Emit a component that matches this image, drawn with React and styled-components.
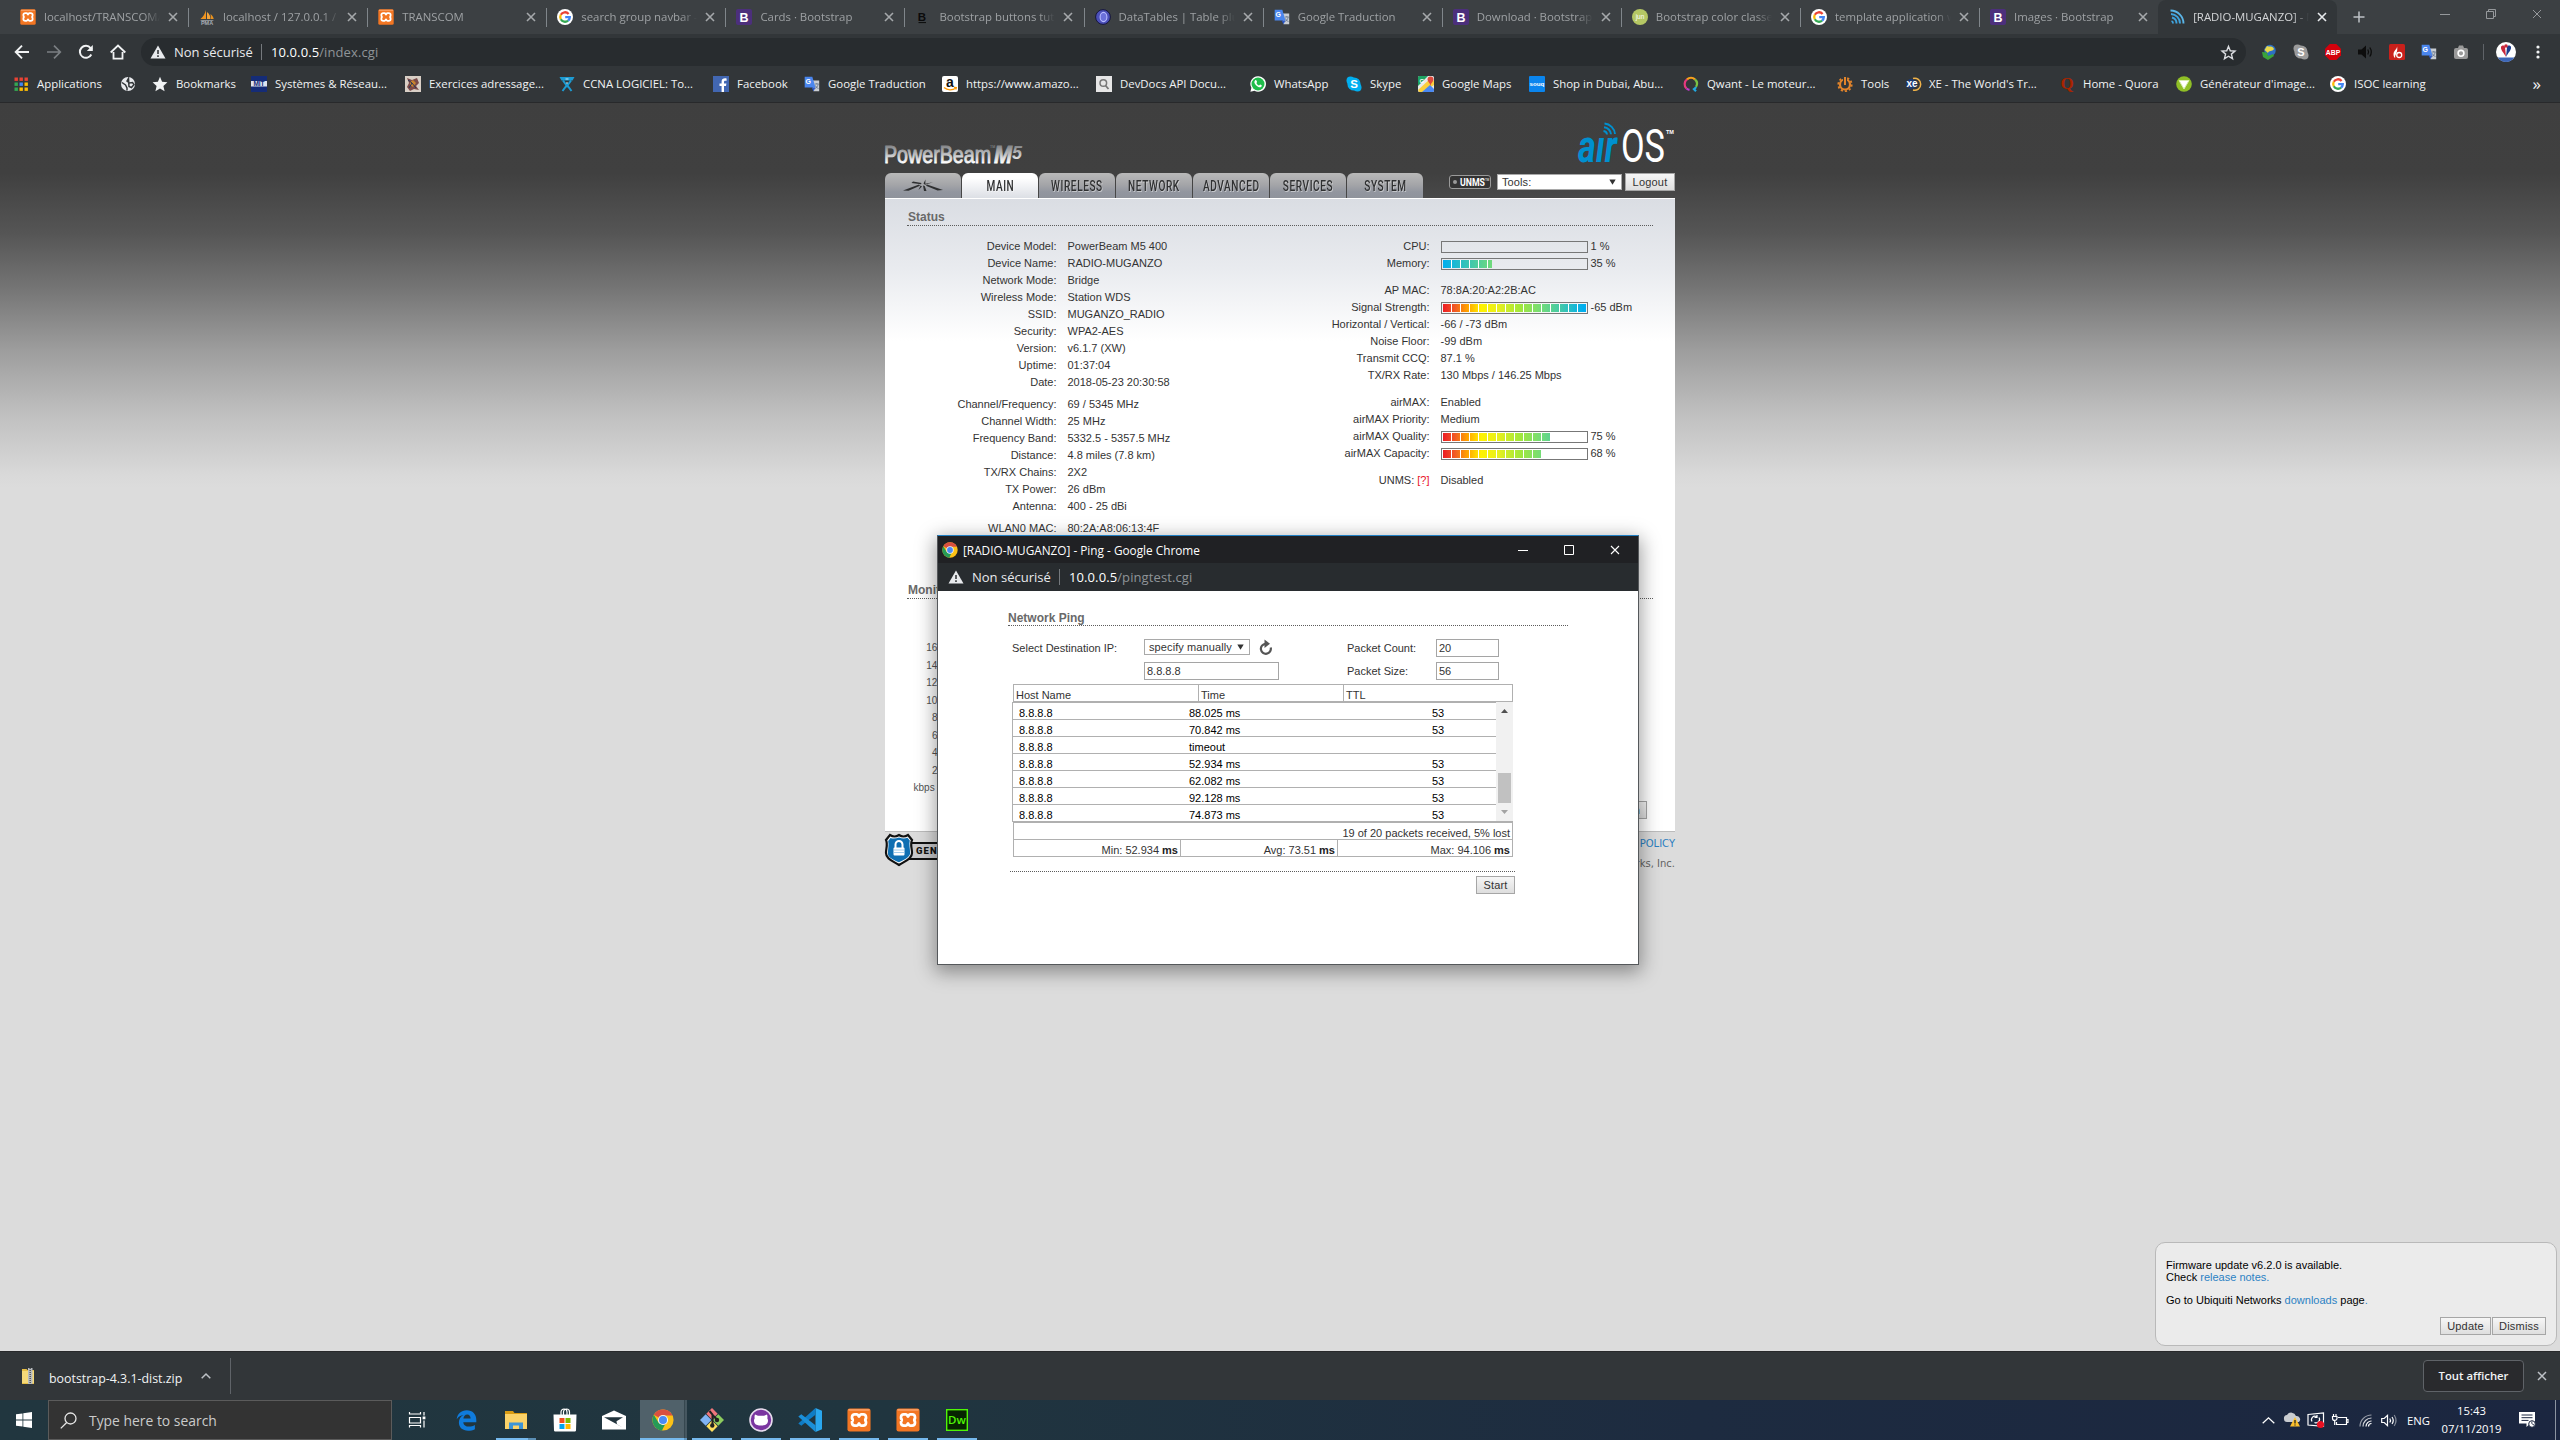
import React from 'react';
import styled, { createGlobalStyle } from 'styled-components';

const ui = `"Open Sans", "Noto Sans", sans-serif`;
const arial = `"Liberation Sans", Arial, sans-serif`;

const Global = createGlobalStyle`
  * { box-sizing: border-box; }
  html, body { margin: 0; padding: 0; background: #dcdcdc; }
  svg { display: block; flex: none; overflow: visible; }
`;

const Desktop = styled.div`
  position: relative;
  width: 2560px;
  height: 1440px;
  overflow: hidden;
  display: flex;
  flex-direction: column;
  font-family: ${ui};
`;

/* ---------- glyphs ---------- */

const Svg = ({ s = 16, w, h, vb = '0 0 16 16', children }) => (
  <svg width={w || s} height={h || s} viewBox={vb} fill="none">{children}</svg>
);

const letter = (t, fill, size, x = 8, y = 12.5, weight = 700, family = 'Liberation Sans') => (
  <text x={x} y={y} fill={fill} fontSize={size} fontWeight={weight} fontFamily={family} textAnchor="middle">{t}</text>
);

const GoogleG = () => (
  <>
    <circle cx="8" cy="8" r="8" fill="#fff" />
    <g strokeWidth="2.3">
      <path d="M11.6 4.9A4.8 4.8 0 0 0 3.8 5.7" stroke="#ea4335" />
      <path d="M3.8 5.7a4.8 4.8 0 0 0 0 4.6" stroke="#fbbc05" />
      <path d="M3.8 10.3a4.8 4.8 0 0 0 7.3 1.3" stroke="#34a853" />
      <path d="M11.1 11.6A4.8 4.8 0 0 0 12.8 8.1H8.2" stroke="#4285f4" />
    </g>
  </>
);

const Xampp = () => (
  <>
    <rect x=".3" y=".3" width="15.4" height="15.4" rx="1.5" fill="#f37623" />
    <rect x="1" y=".8" width="14" height="1" fill="#f9a36b" />
    <path d="M5.2 4.200h1.400c.9 0 1 1.500 1.400 1.500s.5-1.500 1.400-1.500h1.400c2.400 0 2.400 3.600.6 3.800 1.800.2 1.800 3.800-.6 3.800H9.400c-.9 0-1-1.500-1.400-1.500s-.5 1.500-1.400 1.500H5.200c-2.400 0-2.400-3.600-.6-3.800C2.800 7.800 2.800 4.200 5.200 4.200z" stroke="#fff" strokeWidth="1.800" />
  </>
);

const Chrome = () => (
  <>
    <circle cx="8" cy="8" r="7.7" fill="#fbc116" />
    <path d="M8 8L1.330 4.150A7.700 7.700 0 0 1 14.900 4.600L15 4.800H8z" fill="#d94f40" />
    <path d="M1.330 4.150L4.900 10.200 8 12 7.200 15.660A7.700 7.700 0 0 1 1.330 4.150z" fill="#259b57" />
    <path d="M4.900 9.900L8 11.400l1.500-.2L7.200 15.660z" fill="#259b57" />
    <circle cx="8" cy="8" r="3.700" fill="#f4f4f4" />
    <circle cx="8" cy="8" r="2.900" fill="#4a8af4" />
  </>
);

const Translate = () => (
  <>
    <path d="M7 4.500h8.200v10.700H9.500z" fill="#c9cdd3" />
    <path d="M.7.7h7.600l3.200 10.800H.7z" fill="#4a86ee" />
    <path d="M7.600 11.500h3.900l-2 3.700z" fill="#2a56c6" />
    {letter('G', '#fff', 7, 4.300, 8)}
    <path d="M10.800 8h4M12.800 7v1M11.300 12.500c1.500-.8 2.500-2.500 2.800-4.300M11.500 9.500c.5 1.500 1.500 2.500 3 3" stroke="#5f6f86" strokeWidth=".8" />
  </>
);

const Boot = () => (
  <>
    <rect width="16" height="16" rx="2" fill="#4c2f7c" />
    {letter('B', '#fff', 12.500, 8, 12.500)}
  </>
);

const airWave = (
  <g strokeWidth="1.900">
    <path d="M1.500 1.500A13 13 0 0 1 14.500 14.500" stroke="#5bb4e6" />
    <path d="M2 5A9.500 9.500 0 0 1 11 14.500" stroke="#3fa3dd" />
    <path d="M3 8.500A6 6 0 0 1 7.500 14.500" stroke="#3fa3dd" />
    <path d="M2.500 12A2.500 2.500 0 0 1 4 14.500" stroke="#3fa3dd" />
  </g>
);

const art = {
  xampp: <Xampp />,
  pma: <><path d="M7 1v9H1.500C4 8 6 5 7 1z" fill="#f0941f" /><path d="M8 3c2.500 2 3.500 4.500 3.500 7H8z" fill="#f5a43a" /><path d="M11.500 5c2 1.500 3 3.500 3.200 5h-2.700z" fill="#e8911e" /><path d="M1 11h14l-1.500 1h-11z" fill="#8a8f94" /><text x="8" y="16" textAnchor="middle" fontSize="5.500" fontWeight="700" fontFamily="Liberation Sans" fill="#a7adb5">PMA</text></>,
  google: <GoogleG />,
  boot: <Boot />,
  w3: <><g>{letter('B', '#0b0b0b', 11.500, 7, 11.500)}</g><path d="M3.500 13.600h7.500" stroke="#0b0b0b" strokeWidth="1" /></>,
  dt: <><circle cx="8" cy="8" r="7.400" fill="#4b4fb8" stroke="#15153a" /><ellipse cx="8.500" cy="8" rx="3.400" ry="4.600" fill="#6b70da" stroke="#b8bbff" strokeWidth="1.100" /></>,
  translate: <Translate />,
  jun: <><circle cx="8" cy="8" r="8" fill="#b5c764" />{letter('jun', '#fff', 6.500, 8, 10, 400)}</>,
  air: airWave,
  apps: <>{[0, 1, 2].map((r) => [0, 1, 2].map((c) => <rect key={r + '-' + c} x={1.500 + c * 5} y={1.500 + r * 5} width="3.400" height="3.400" fill={[['#ea4335', '#ea4335', '#ea4335'], ['#34a853', '#4285f4', '#fbbc05'], ['#34a853', '#fbbc05', '#fbbc05']][r][c]} />))}</>,
  globe: <><circle cx="8" cy="8" r="7" fill="#e8eaed" /><path d="M2 6.500L5.500 9l1.500 3v2.500M8.500 2.500L7 5l2.500 2 3-.5 1.500 2-2.500 3-2.500-1z" stroke="#323639" strokeWidth="1.500" /></>,
  star: <path d="M8 .8l2.100 5 5.300.5-4 3.600 1.200 5.300L8 12.400l-4.600 2.800 1.200-5.300-4-3.600 5.300-.5z" fill="#f1f3f4" />,
  mit: <><rect width="16" height="16" fill="#152c77" /><rect x="0" y="5" width="16" height="5.500" fill="#dfe3ef" />{letter('MIT', '#152c77', 6.500, 8, 10)}</>,
  exo: <><rect width="16" height="16" fill="#d9cfc6" /><path d="M2 2l5 2 5-2 2 5-3 3 3 4-5-1-4 2-3-4 2-4z" fill="#7b4a48" /><path d="M5 6l3-2 3 3-3 4-3-2z" fill="#c8832f" /><path d="M4 12l3-5 4 5M3 4l4 3" stroke="#2b3557" /></>,
  ccna: <><path d="M.5 1h15l-2 3.500h-11z" fill="#1d9bd3" /><path d="M4 4.500l4 5.500 4-5.500M3.500 15L8 9l4.500 6" stroke="#1d9bd3" strokeWidth="2" /><path d="M6.500 3h3M8 6v2" stroke="#c8eefe" /></>,
  fb: <><rect width="16" height="16" fill="#4267b2" /><path d="M11 16V10h2l.4-2.500H11V6c0-.8.4-1.300 1.400-1.300h1.200V2.500c-3-.5-5 .4-5 3.200v1.800H6.500V10h2.100v6z" fill="#fff" /></>,
  amazon: <><rect width="16" height="16" rx="2" fill="#fff" />{letter('a', '#111', 14, 8, 10.500)}<path d="M2 11.500c3.500 3 8.500 3 12 .5M12 11.300l2.300.2-.5 2" stroke="#f90" strokeWidth="1.300" /></>,
  dev: <><rect width="16" height="16" fill="#e6e6e6" /><circle cx="7.300" cy="7" r="3.300" stroke="#777" strokeWidth="1.500" /><path d="M9.500 9.500l3 3.500" stroke="#777" strokeWidth="1.800" /></>,
  wa: <><path d="M8 .3a7.600 7.600 0 0 0-6.600 11.400L.4 15.700l4.100-1A7.700 7.700 0 1 0 8 .3z" fill="#fff" /><circle cx="8" cy="8" r="6.500" fill="#1fbd4b" /><path d="M5 4.500c1-1 1.500 0 2 1.200.2.600-.7 1-.5 1.500.6 1.200 1.500 1.900 2.500 2.200.5.100.8-1 1.300-.8 1.500.7 1.800.9 1.200 1.900-1 1.500-3.500.9-5.500-1.200S4 5.600 5 4.500z" fill="#fff" /></>,
  skype: <><circle cx="8" cy="8" r="6.600" fill="#00aff0" /><circle cx="4.500" cy="4.500" r="4" fill="#00aff0" /><circle cx="11.500" cy="11.500" r="4" fill="#00aff0" />{letter('S', '#fff', 11.500, 8, 12.200)}</>,
  maps: <><rect width="16" height="16" rx="1.500" fill="#e9e9e9" /><path d="M1 0h9L0 10V1z" fill="#1ea362" /><path d="M0 14L13 2l3 3v4L5 16H1z" fill="#fbcf3c" /><path d="M4 16l8-7 4 4v2l-1 1z" fill="#4a89f3" /><path d="M12.500.5a3 3 0 0 1 3 3c0 2-2.200 3-3 6-.8-3-3-4-3-6a3 3 0 0 1 3-3z" fill="#dd4b3e" />{letter('G', '#fff', 6, 3.800, 6.500)}</>,
  souq: <><rect width="16" height="16" rx="1" fill="#0a85ee" />{letter('souq', '#fff', 6.200, 8, 10)}</>,
  qwant: <g strokeWidth="2.200"><path d="M3.500 12.500A6 6 0 0 1 4 3.400" stroke="#e5397f" /><path d="M4 3.400A6 6 0 0 1 12 3.400" stroke="#f9a11b" /><path d="M12 3.400a6 6 0 0 1 1 7.500" stroke="#7ac143" /><path d="M13 10.900a6 6 0 0 1-2 2.300l2 2" stroke="#21a9e1" /><path d="M3.500 12.500a6 6 0 0 0 3 1.400" stroke="#c33bd1" /></g>,
  gear: <><circle cx="8" cy="8.500" r="5" stroke="#e2842b" strokeWidth="2.200" /><circle cx="8" cy="8.500" r="6.700" stroke="#e2842b" strokeWidth="1.800" strokeDasharray="2.200 2" /><path d="M8 1v8" stroke="#323639" strokeWidth="4" /><path d="M8 1v8" stroke="#e2842b" strokeWidth="2" /></>,
  xe: <><path d="M8 2.500A6 6 0 1 1 8 14" stroke="#f0b34a" strokeWidth="1.500" /><circle cx="6" cy="8" r="5" fill="#1d3a72" />{letter('xe', '#fff', 10, 7, 11)}</>,
  quora: <>{letter('Q', '#a82400', 17, 8, 13, 700, 'Liberation Serif')}</>,
  gen: <><circle cx="8" cy="8" r="7.800" fill="#8fbf26" /><path d="M3 4.500h10L8 13z" fill="#fff" stroke="#d7ecae" /></>,
  idm: <><circle cx="9" cy="6.500" r="5.700" fill="#2d6fc4" /><path d="M6 2c2 1 6-.5 7 3-2 3-5 1-6 4L3.500 6z" fill="#e8d84b" /><path d="M1 8l5 .5L7 12l5-2 1 2-6 4-5-3z" fill="#3aa33c" /></>,
  skypeGrey: <><circle cx="8" cy="8" r="6.600" fill="#9b9b9b" /><circle cx="4.500" cy="4.500" r="4" fill="#9b9b9b" /><circle cx="11.500" cy="11.500" r="4" fill="#9b9b9b" />{letter('S', '#fff', 11, 8, 12)}</>,
  abp: <><path d="M4.700 0h6.600L16 4.700v6.600L11.300 16H4.700L0 11.300V4.700z" fill="#d3010c" />{letter('ABP', '#fff', 6.800, 8, 10.500)}</>,
  sound: <><path d="M1 5.500h3.500L9 1.500v13l-4.500-4H1z" fill="#0d0d0d" /><path d="M10.800 5.500q1.600 2.500 0 5M12.800 3.500q3 4.500 0 9" stroke="#0d0d0d" strokeWidth="1.300" /></>,
  fire: <><rect width="16" height="16" rx="1.500" fill="#c9201b" /><circle cx="10.200" cy="11" r="2.500" stroke="#fff" strokeWidth="1.300" /><path d="M8 2c.6 3-3.500 4.500-3.500 8.200 0 2 .7 3.300 1.700 3.800C5.500 10.500 9.500 8.500 8 2z" fill="#fff" /></>,
  camera: <><rect x="1" y="4" width="14" height="11" rx="2" fill="#9a9a9a" /><path d="M5 4l1-2.500h4L11 4z" fill="#9a9a9a" /><circle cx="8" cy="9.300" r="2.900" stroke="#fff" strokeWidth="1.600" /></>,
};

const Fav = ({ n }) => <Svg>{art[n]}</Svg>;
const Close = ({ s = 10, c = '#a5a8ab', w = 1.6 }) => <Svg s={s} vb="0 0 10 10"><path d="M1 1l8 8M9 1L1 9" stroke={c} strokeWidth={w} /></Svg>;
const Warn = () => <Svg w={16} h={14} vb="0 0 16 14"><path d="M8 .5L15.500 13.500H.5z" fill="#e8eaed" /><path d="M8 5v4M8 10.300v1.700" stroke="#282c2f" strokeWidth="1.500" /></Svg>;

/* ---------- tab strip ---------- */

const Strip = styled.div`
  height: 34px;
  flex: none;
  background: #3c4043;
  display: flex;
  padding-left: 9px;
`;
const Tab = styled.div`
  position: relative;
  width: 179.1px;
  flex: none;
  height: 34px;
  padding: 0 10px 0 11px;
  display: flex;
  align-items: center;
  border-radius: 8px 8px 0 0;
  background: ${(p) => (p.$on ? '#323639' : 'transparent')};
  color: ${(p) => (p.$on ? '#d3d5d7' : '#9ea1a4')};
  font-size: 11.4px;
  &::after {
    content: '';
    display: ${(p) => (p.$line ? 'block' : 'none')};
    position: absolute;
    right: -1px;
    top: 8px;
    width: 1px;
    height: 19px;
    background: #80868b;
  }
`;
const TabText = styled.span`
  width: 116px;
  margin: 0 8px 0 8px;
  flex: none;
  line-height: 16px;
  overflow: hidden;
  white-space: nowrap;
  mask-image: linear-gradient(90deg, #000 86%, transparent);
`;
const NewTab = styled.div`
  width: 44px;
  display: flex;
  align-items: center;
  justify-content: center;
`;
const WinButtons = styled.div`
  margin-left: auto;
  height: 28px;
  display: flex;
  & > * { width: 46px; display: flex; align-items: center; justify-content: center; }
`;

const tabs = [
  ['xampp', 'localhost/TRANSCOM/'], ['pma', 'localhost / 127.0.0.1 / t'], ['xampp', 'TRANSCOM'], ['google', 'search group navbar - R'],
  ['boot', 'Cards · Bootstrap'], ['w3', 'Bootstrap buttons tuto'], ['dt', 'DataTables | Table plug'], ['translate', 'Google Traduction'],
  ['boot', 'Download · Bootstrap'], ['jun', 'Bootstrap color classes'], ['google', 'template application we'], ['boot', 'Images · Bootstrap'], ['air', '[RADIO-MUGANZO] - M'],
];

/* ---------- toolbar ---------- */

const Toolbar = styled.div`
  height: 36px;
  flex: none;
  background: #323639;
  display: flex;
  align-items: center;
`;
const NavIcons = styled.div`
  width: 141px;
  padding-left: 14px;
  display: flex;
  gap: 16px;
`;
const Omnibox = styled.div`
  width: 2105px;
  height: 28px;
  border-radius: 14px;
  background: #282c2f;
  padding: 0 10px 0 9px;
  display: flex;
  align-items: center;
`;
const Insecure = styled.span`
  margin-left: 8px;
  width: 79px;
  font-size: 13px;
  line-height: 18px;
  white-space: nowrap;
  color: #e8eaed;
`;
const Divider = styled.i`
  width: 1px;
  height: 16px;
  margin: 0 9px 0 8px;
  background: #75797d;
`;
const Url = styled.span`
  font-size: 13px;
  line-height: 18px;
  color: #8f9498;
  letter-spacing: 0.1px;
  b { font-weight: 400; color: #fff; }
`;
const Push = styled.div`flex: 1;`;
const Extensions = styled.div`
  padding-left: 15px;
  display: flex;
  align-items: center;
  gap: 16px;
`;
const ToolLine = styled.i`
  width: 1px;
  height: 16px;
  margin: 0 12px 0 14px;
  background: #5f6368;
`;

/* ---------- bookmarks ---------- */

const Bookmarks = styled.div`
  height: 33px;
  flex: none;
  padding: 0 19px 4px 13px;
  display: flex;
  align-items: center;
  background: #323639;
  border-bottom: 1px solid #28292b;
`;
const Mark = styled.div`
  width: ${(p) => p.$w}px;
  flex: none;
  display: flex;
  align-items: center;
  gap: 8px;
  font-size: 11.4px;
  line-height: 16px;
  color: #f1f3f4;
  white-space: nowrap;
`;
const More = styled.span`
  margin-left: auto;
  font-size: 17px;
  line-height: 16px;
  color: #f1f3f4;
`;
const marks = [
  ['apps', 'Applications', 107], ['globe', '', 32], ['star', 'Bookmarks', 99], ['mit', 'Systèmes & Réseau...', 154], ['exo', 'Exercices adressage...', 154],
  ['ccna', 'CCNA LOGICIEL: To...', 154], ['fb', 'Facebook', 91], ['translate', 'Google Traduction', 138], ['amazon', 'https://www.amazo...', 154],
  ['dev', 'DevDocs API Docu...', 154], ['wa', 'WhatsApp', 96], ['skype', 'Skype', 72], ['maps', 'Google Maps', 111], ['souq', 'Shop in Dubai, Abu...', 154],
  ['qwant', 'Qwant - Le moteur...', 154], ['gear', 'Tools', 68], ['xe', "XE - The World's Tr...", 154], ['quora', 'Home - Quora', 117],
  ['gen', "Générateur d'image...", 154], ['google', 'ISOC learning', 110],
];

/* ---------- airOS page ---------- */

const Page = styled.main`
  height: 1248px;
  flex: none;
  display: flex;
  flex-direction: column;
  align-items: center;
  font: 11px/17px ${arial};
  color: #333;
  background: linear-gradient(#3f3f3f 0, #404040 70px, #555555 130px, #747474 184px, #9d9d9d 247px, #c1c1c1 314px, #d9d9d9 372px, #dcdcdc 385px);
`;
const Column = styled.div`width: 790px;`;
const Brand = styled.header`
  height: 70px;
  display: flex;
  justify-content: space-between;
`;
const BrandLeft = styled.div`padding-top: 41px;`;
const BrandRight = styled.div`padding-top: 18px;`;
const NavRow = styled.nav`
  height: 25px;
  display: flex;
`;
const NavTab = styled.div`
  width: 76px;
  height: 25px;
  margin-right: 1px;
  border-radius: 6px 6px 0 0;
  display: flex;
  align-items: center;
  justify-content: center;
  background: ${(p) => (p.$on ? 'linear-gradient(#ffffff 20%, #dcdfe5)' : 'linear-gradient(#b9b9b9, #a5a6a9 45%, #92969f 75%, #8f939b)')};
  span {
    font: 500 14px/16px Roboto, sans-serif;
    letter-spacing: 0.8px;
    color: #2f3031;
    text-shadow: 1px 1px 0 rgba(255, 255, 255, 0.45);
    transform: scaleX(0.72);
    white-space: nowrap;
    margin-top: 1px;
  }
`;
const NavTools = styled.div`
  margin-left: auto;
  display: flex;
  align-items: flex-start;
`;
const Unms = styled.div`
  width: 42px;
  height: 14px;
  margin: 2px 6px 0 0;
  border: 1px solid #9a9a9a;
  border-radius: 3px;
  background: #333;
  display: flex;
  align-items: center;
  padding-left: 3px;
  gap: 3px;
  i { width: 4px; height: 4px; border-radius: 2px; background: #999; }
`;
const Select = styled.div`
  width: ${(p) => p.$w}px;
  height: 16px;
  margin-top: ${(p) => p.$mt || 0}px;
  padding: 0 5px 0 4px;
  border: 1px solid #a9a9a9;
  background: #fff;
  display: flex;
  align-items: center;
  justify-content: space-between;
  line-height: 14px;
  letter-spacing: 0.1px;
  color: #333;
`;
const Arrow = () => <Svg w={7} h={6} vb="0 0 7 6"><path d="M.3.500h6.400L3.500 5.800z" fill="#333" /></Svg>;
const Button = styled.button`
  width: ${(p) => p.$w}px;
  height: 18px;
  margin: 0;
  padding: 0;
  border: 1px solid #a6a6a6;
  background: linear-gradient(#f6f6f6, #dedede);
  font: 11px/15px ${arial};
  letter-spacing: 0.2px;
  color: #333;
`;
const LogoutButton = styled(Button)`margin-left: 3px;`;
const Panel = styled.section`
  height: 634px;
  padding: 0 22px;
  border-top: 1px solid #fff;
  border-bottom: 1px solid #bcbcbc;
  background: linear-gradient(#dadde3, #e9ebef 70px, #ffffff 142px);
`;
const Title = styled.h2`
  height: 27px;
  margin: 0;
  padding: 11px 0 0 1px;
  border-bottom: 1px dotted #5c5c5c;
  font: bold 12px/15px ${arial};
  color: #696969;
`;
const PingHeading = styled(Title)`
  width: 560px;
  padding: 12px 0 0 0;
`;
const StatusGrid = styled.div`
  height: 346px;
  padding-top: 12px;
  display: grid;
  grid-template-columns: 373px 1fr;
`;
const Row = styled.div`
  height: 17px;
  margin-bottom: ${(p) => p.$gap || 0}px;
  display: grid;
  grid-template-columns: 149.5px 1fr;
  column-gap: 11px;
  white-space: nowrap;
  & > :first-child { text-align: right; }
  em { font-style: normal; color: #e8132b; }
`;
const Value = styled.div`
  display: flex;
  align-items: center;
  gap: 3px;
`;
const Meter = styled.div`
  width: 147px;
  height: 12px;
  padding: 1px;
  border: 1px solid #777;
`;
const Fill = styled.div`
  height: 8px;
  width: ${(p) => p.$px}px;
  background:
    repeating-linear-gradient(90deg, transparent 0 8px, #fff 8px 9px),
    ${(p) => (p.$cool
    ? 'linear-gradient(90deg, #00aeef, #73db78 50px)'
    : 'linear-gradient(90deg, #ed1c24 0, #f15a24 12px, #ffa000 24px, #fff200 38px, #e6f01e 56px, #a5e838 76px, #74dc78 98px, #3cc6b0 120px, #00aeef 140px)')};
`;
const left = [
  ['Device Model:', 'PowerBeam M5 400'], ['Device Name:', 'RADIO-MUGANZO'], ['Network Mode:', 'Bridge'], ['Wireless Mode:', 'Station WDS'],
  ['SSID:', 'MUGANZO_RADIO'], ['Security:', 'WPA2-AES'], ['Version:', 'v6.1.7 (XW)'], ['Uptime:', '01:37:04'], ['Date:', '2018-05-23 20:30:58', 5],
  ['Channel/Frequency:', '69 / 5345 MHz'], ['Channel Width:', '25 MHz'], ['Frequency Band:', '5332.5 - 5357.5 MHz'], ['Distance:', '4.8 miles (7.8 km)'],
  ['TX/RX Chains:', '2X2'], ['TX Power:', '26 dBm'], ['Antenna:', '400 - 25 dBi', 5], ['WLAN0 MAC:', '80:2A:A8:06:13:4F'],
];
const right = [
  ['CPU:', '1 %', 0, { px: 0 }], ['Memory:', '35 %', 10, { px: 49, cool: true }], ['AP MAC:', '78:8A:20:A2:2B:AC'], ['Signal Strength:', '-65 dBm', 0, { px: 143 }],
  ['Horizontal / Vertical:', '-66 / -73 dBm'], ['Noise Floor:', '-99 dBm'], ['Transmit CCQ:', '87.1 %'], ['TX/RX Rate:', '130 Mbps / 146.25 Mbps', 10],
  ['airMAX:', 'Enabled'], ['airMAX Priority:', 'Medium'], ['airMAX Quality:', '75 %', 0, { px: 107 }], ['airMAX Capacity:', '68 %', 10, { px: 98 }],
  [<>UNMS: <em>[?]</em></>, 'Disabled'],
];
const Axis = styled.div`
  width: 36px;
  height: 150px;
  margin-top: 44px;
  display: flex;
  flex-direction: column;
  justify-content: space-between;
  text-align: right;
  font-size: 10px;
  line-height: 10px;
  white-space: nowrap;
  color: #545454;
`;
const RefreshLine = styled.div`
  margin: 8px 6px 0 0;
  display: flex;
  justify-content: flex-end;
`;
const Foot = styled.footer`
  display: flex;
  justify-content: space-between;
`;
const FootText = styled.div`
  padding-top: 2px;
  text-align: right;
  font: 10px/20px "DejaVu Sans", sans-serif;
  color: #636363;
  a { color: #2b7fc0; }
`;

/* ---------- ping window ---------- */

const PingWindow = styled.div`
  position: absolute;
  left: 937px;
  top: 535px;
  width: 702px;
  height: 430px;
  border: 1px solid #55585b;
  border-top-color: #2180c4;
  background: #fff;
  box-shadow: 0 5px 18px 2px rgba(0, 0, 0, 0.38);
  display: flex;
  flex-direction: column;
`;
const PingTitle = styled.div`
  height: 27px;
  flex: none;
  padding-left: 4px;
  display: flex;
  align-items: center;
  gap: 5px;
  background: #202124;
  color: #fff;
  font-size: 11.8px;
  line-height: 18px;
`;
const PingButtons = styled.div`
  margin-left: auto;
  display: flex;
  & > * { width: 46px; display: flex; justify-content: center; align-items: center; }
`;
const PingUrl = styled.div`
  height: 28px;
  flex: none;
  padding-left: 10px;
  display: flex;
  align-items: center;
  background: #282c2f;
`;
const PingBody = styled.div`
  flex: 1;
  padding: 8px 70px 0 70px;
  font: 11px/18px ${arial};
  color: #333;
`;
const Form = styled.div`
  margin-top: 13px;
  padding-left: 4px;
  display: grid;
  grid-template-columns: 132px 203px 89px 63px;
  grid-template-rows: 18px 18px;
  row-gap: 5px;
`;
const Field = styled.div`
  width: ${(p) => p.$w}px;
  height: 18px;
  padding-left: 2px;
  border: 1px solid #a5a5a5;
  line-height: 17px;
`;
const Line = styled.div`display: flex; gap: 9px;`;
const Table = styled.div`
  width: 501px;
  margin: 4px 0 0 4px;
  color: #333;
`;
const HeadRow = styled.div`
  height: 18px;
  margin-left: 1px;
  display: flex;
  border: 1px solid #b0b0b0;
  line-height: 21px;
`;
const HeadCell = styled.div`
  width: ${(p) => p.$w}px;
  padding-left: 2px;
  border-right: ${(p) => (p.$end ? 0 : 1)}px solid #b0b0b0;
`;
const List = styled.div`
  height: 120px;
  display: flex;
  border: solid #b0b0b0;
  border-width: 0 0 1px 1px;
`;
const Rows = styled.div`flex: 1; border-top: 1px solid #b0b0b0;`;
const PingRow = styled.div`
  height: 17px;
  padding-left: 6px;
  display: grid;
  grid-template-columns: 170px 243px 1fr;
  border-bottom: 1px solid #b0b0b0;
  line-height: 20px;
  color: #000;
  &:last-child { border-bottom: 0; }
`;
const Scroll = styled.div`
  width: 17px;
  padding: 7px 2px 7px;
  background: #f1f1f1;
  display: flex;
  flex-direction: column;
  align-items: center;
`;
const Thumb = styled.div`
  width: 13px;
  height: 30px;
  margin: auto 0 7px;
  background: #c1c1c1;
`;
const Summary = styled.div`
  height: ${(p) => (p.$end ? 17 : 18)}px;
  margin-left: 1px;
  display: flex;
  border: 1px solid #b0b0b0;
  border-width: ${(p) => (p.$end ? '0 1px 1px' : '1px')};
  line-height: ${(p) => (p.$end ? 20 : 21)}px;
`;
const SumCell = styled.div`
  width: ${(p) => p.$w}px;
  padding-right: 2px;
  text-align: right;
  border-right: ${(p) => (p.$end ? 0 : 1)}px solid #b0b0b0;
  b { color: #222; }
`;
const StartLine = styled.div`
  width: 505px;
  margin: 14px 0 0 2px;
  padding-top: 4px;
  border-top: 1px dotted #5c5c5c;
  display: flex;
  justify-content: flex-end;
`;
const pings = ['88.025 ms', '70.842 ms', 'timeout', '52.934 ms', '62.082 ms', '92.128 ms', '74.873 ms'];

/* ---------- toast ---------- */

const Toast = styled.div`
  position: absolute;
  left: 2155px;
  top: 1242px;
  width: 402px;
  height: 104px;
  padding: 16px 10px 0 10px;
  border: 1px solid #b9b9b9;
  border-radius: 10px;
  background: #ebebeb;
  font: 11px/12px ${arial};
  color: #000;
  p { margin: 0 0 11px; }
  a { color: #2b82c4; }
`;
const ToastButtons = styled.div`
  display: flex;
  justify-content: flex-end;
  gap: 1px;
`;

/* ---------- downloads ---------- */

const Downloads = styled.div`
  height: 49px;
  flex: none;
  border-top: 1px solid #28292b;
  background: #323639;
  display: flex;
  align-items: center;
  color: #f1f3f4;
  padding: 0 13px 0 20px;
`;
const FileName = styled.span`
  width: 152px;
  margin-left: 13px;
  padding-top: 5px;
  font-size: 12.4px;
  line-height: 18px;
`;
const DlLine = styled.i`
  width: 1px;
  height: 36px;
  margin-left: 19px;
  background: #5f6368;
`;
const ShowAll = styled.div`
  width: 101px;
  height: 32px;
  margin: 0 13px 0 auto;
  border: 1px solid #5f6368;
  border-radius: 4px;
  background: #292a2d;
  font-size: 11.3px;
  font-weight: 600;
  line-height: 30px;
  text-align: center;
`;

/* ---------- taskbar ---------- */

const Taskbar = styled.div`
  height: 40px;
  flex: none;
  display: flex;
  background: linear-gradient(90deg, #21363f 0, #20353f 900px, #1d2b40 1700px, #1b2640 2560px);
`;
const StartBtn = styled.div`
  width: 48px;
  display: flex;
  align-items: center;
  justify-content: center;
`;
const Search = styled.div`
  width: 344px;
  border: 1px solid #5b5b5b;
  background: #333;
  padding-left: 11px;
  display: flex;
  align-items: center;
  gap: 12px;
  font-size: 13.9px;
  color: #cbcbcb;
`;
const lines = {
  multi: 'linear-gradient(90deg, transparent 0 5px, #76b9ed 5px 37px, #5b8fb5 37px 45px, transparent 45px)',
  active: 'linear-gradient(90deg, transparent 0 2px, #76b9ed 2px 46px, #5d93bd 46px)',
  run: 'linear-gradient(90deg, transparent 0 5px, #76b9ed 5px 45px, transparent 45px)',
};
const Task = styled.div`
  width: ${(p) => p.$w || 49}px;
  display: flex;
  align-items: center;
  justify-content: center;
  background-image:
    ${(p) => lines[p.$state] || 'none'},
    ${(p) => (p.$state === 'active' ? 'linear-gradient(90deg, transparent 0 2px, #50616a 2px 46px, #36474f 46px 47px, #465760 47px)' : 'none')};
  background-size: 100% 2px, 100% 100%;
  background-position: 0 100%, 0 0;
  background-repeat: no-repeat;
`;
const Tray = styled.div`
  margin-left: auto;
  display: flex;
  align-items: center;
  color: #fff;
  font-size: 11.3px;
`;
const TrayItem = styled.div`
  width: ${(p) => p.$w}px;
  display: flex;
  justify-content: center;
`;
const Clock = styled.div`
  width: 71px;
  text-align: center;
  line-height: 18px;
`;
const Peek = styled.i`
  width: 5px;
  height: 40px;
  border-left: 1px solid #8b93a0;
`;

const tasks = [
  ['view', <Svg s={18} vb="0 0 18 18"><path d="M1.500 1v2h11V1M1.500 6.500h11v5.500h-11zM1.500 16.500v-2h11v2M16 1v3.500M16 9.500v7" stroke="#fff" strokeWidth="1.200" /><rect x="14.600" y="5.500" width="2.800" height="2.800" fill="#fff" /></Svg>, '', 49],
  ['edge', <Svg s={21} vb="0 0 21 21"><path d="M.7 9.300C1.300 4 5.200.3 10.700.3c6 0 9.600 4 9.600 9.700v2.200H7.300c.2 3 2.700 4.400 5.600 4.400 2.300 0 4.300-.6 6-1.600v4.200c-2 1.100-4.300 1.600-6.800 1.600-5.700 0-9.200-3.400-9.200-8.200 0-3.500 1.700-6.300 4.600-7.700C5 5.300 2.300 6.500.7 9.300zM7.400 8.400h7.200c0-2.300-1.100-4-3.400-4-2.100 0-3.600 1.700-3.800 4z" fill="#0f7bdc" /></Svg>, '', 50],
  ['files', <Svg w={22} h={18} vb="0 0 22 18"><path d="M0 0h8l1.500 2H22v4H0z" fill="#d99b13" /><path d="M0 3h22v15H0z" fill="#fbd268" /><path d="M4 11.500h14V18h-4v-3.500H8V18H4z" fill="#3d94d6" /></Svg>, 'multi'],
  ['store', <Svg w={24} h={24} vb="0 0 24 24"><path d="M8 7V4a3 3 0 0 1 6 0v3M10.500 7V4a3 3 0 0 1 6 0v3" stroke="#fff" strokeWidth="1.200" /><path d="M.5 6.500h23l-.5 16a1.200 1.200 0 0 1-1.200 1H2.200A1.200 1.200 0 0 1 1 22.500z" fill="#fff" /><path d="M6.500 10h5v5h-5z" fill="#f04e1f" /><path d="M12.500 10h5v5h-5z" fill="#7eb900" /><path d="M6.500 16h5v5h-5z" fill="#00a3ee" /><path d="M12.500 16h5v5h-5z" fill="#feb800" /></Svg>, ''],
  ['mail', <Svg w={24} h={20} vb="0 0 24 20"><path d="M0 6L12 .5 24 6v13.500H0z" fill="#fff" /><path d="M2 7.300h19l-6.500 4 .5 3.200 5 2.500z" fill="#22343d" /></Svg>, ''],
  ['chrome', <Svg s={22}><Chrome /></Svg>, 'active'],
  ['git', <Svg s={24} vb="0 0 24 24"><path d="M12 0l5.700 5.700-5.700 5.700-5.700-5.700z" fill="#f1767b" /><path d="M18.300 6.300L24 12l-5.700 5.700-5.700-5.700z" fill="#8ccb5e" /><path d="M5.700 6.300l5.700 5.700-5.700 5.700L0 12z" fill="#80b3f5" /><path d="M12 12.600l5.700 5.700L12 24l-5.700-5.700z" fill="#ffdf5e" /><path d="M9.500 3l3 3.500V18M12.500 7l4.500 4.500" stroke="#222" strokeWidth="2" /><circle cx="12.300" cy="17.500" r="2.200" fill="#222" /><circle cx="17" cy="12" r="2.200" fill="#222" /></Svg>, 'run'],
  ['github', <Svg s={24} vb="0 0 24 24"><circle cx="12" cy="12" r="11" fill="#7a35a0" stroke="#e7dcee" strokeWidth="1.600" /><path d="M6 6.500l3 1.300h6l3-1.300c.6 1.500.6 2.700.3 3.700 1 1.400.9 3.600 0 5-1.200 1.900-3.500 2.300-6.300 2.300s-5.100-.4-6.300-2.300c-.9-1.400-1-3.600 0-5-.3-1-.3-2.200.3-3.700z" fill="#fff" /></Svg>, 'run'],
  ['code', <Svg s={24} vb="0 0 24 24"><path d="M17.500 0L24 2.800v18.400L17.500 24z" fill="#2aa7ee" /><path d="M17.500 0v6.800L3.300 17.800.3 15.600z" fill="#0f7cc5" /><path d="M17.500 24v-6.800L3.300 6.200.3 8.400z" fill="#1b8fd8" /></Svg>, 'run'],
  ['xampp1', <Svg s={24}><Xampp /></Svg>, 'run'],
  ['xampp2', <Svg s={24}><Xampp /></Svg>, 'run'],
  ['dw', <Svg s={22} vb="0 0 22 22"><rect x=".7" y=".7" width="20.600" height="20.600" fill="#072401" stroke="#4ff506" strokeWidth="1.400" /><text x="11" y="15" textAnchor="middle" fontSize="11.500" fontFamily="Open Sans" fontWeight="600" fill="#4ff506">Dw</text></Svg>, 'run'],
];

const StatusRow = ({ r }) => (
  <Row $gap={r[2]}>
    <div>{r[0]}</div>
    <Value>{r[3] && <Meter><Fill $px={r[3].px} $cool={r[3].cool} /></Meter>}{r[1]}</Value>
  </Row>
);

export default function App() {
  return (
    <Desktop>
      <Global />
      <Strip>
        {tabs.map(([n, t], i) => (
          <Tab key={i} $on={i === 12} $line={i < 11}>
            <Fav n={n} /><TabText>{t}</TabText><Close c={i === 12 ? '#e8eaed' : undefined} />
          </Tab>
        ))}
        <NewTab><Svg s={12} vb="0 0 12 12"><path d="M6 .5v11M.5 6h11" stroke="#bdc1c6" strokeWidth="1.500" /></Svg></NewTab>
        <WinButtons>
          <div><Svg s={10} vb="0 0 10 10"><path d="M0 5.500h10" stroke="#96999c" /></Svg></div>
          <div><Svg s={10} vb="0 0 10 10"><path d="M.5 2.500h7v7h-7zM2.500 2.500v-2h7v7h-2" stroke="#96999c" /></Svg></div>
          <div><Close c="#96999c" w={1} /></div>
        </WinButtons>
      </Strip>

      <Toolbar>
        <NavIcons>
          <Svg><path d="M15 8H2M8 1.700L1.700 8 8 14.300" stroke="#f1f3f4" strokeWidth="1.900" /></Svg>
          <Svg><path d="M1 8h13M8 1.700L14.300 8 8 14.300" stroke="#7b7f83" strokeWidth="1.700" /></Svg>
          <Svg><path d="M13.300 10.500A6 6 0 1 1 12.600 4.100L14 5.500" stroke="#f1f3f4" strokeWidth="2" /><path d="M14.800 1v6H8.800z" fill="#f1f3f4" /></Svg>
          <Svg><path d="M3.500 8v6.600h9V8M.7 8.500L8 1.500l7.300 7" stroke="#f1f3f4" strokeWidth="1.800" /></Svg>
        </NavIcons>
        <Omnibox>
          <Warn /><Insecure>Non sécurisé</Insecure><Divider /><Url><b>10.0.0.5</b>/index.cgi</Url><Push />
          <Svg s={15}><path d="M8 1.500l1.900 4.600 5 .4-3.800 3.200 1.200 4.900L8 12l-4.300 2.600 1.200-4.900L1.100 6.500l5-.4z" stroke="#dadce0" strokeWidth="1.500" /></Svg>
        </Omnibox>
        <Extensions>
          {['idm', 'skypeGrey', 'abp', 'sound', 'fire', 'translate', 'camera'].map((n) => <Fav key={n} n={n} />)}
        </Extensions>
        <ToolLine />
        <Svg s={20} vb="0 0 20 20"><circle cx="10" cy="10" r="10" fill="#fff" /><path d="M10 15C8 11 4.500 8 5 5c.5-2 3.500-2 4 0z" fill="#c8283c" /><path d="M10 15c2-4 5.500-7 5-10-.5-2-3.500-2-4 0z" fill="#1c3c8c" /><circle cx="10" cy="4" r="1.800" fill="#c8283c" /><path d="M1.700 15.500h16.600A10 10 0 0 1 10 20a10 10 0 0 1-8.300-4.500z" fill="#3d67b8" /></Svg>
        <Push />
        <Svg w={44} h={16} vb="0 0 44 16"><g fill="#f1f3f4"><circle cx="22" cy="3" r="1.600" /><circle cx="22" cy="8" r="1.600" /><circle cx="22" cy="13" r="1.600" /></g></Svg>
      </Toolbar>

      <Bookmarks>
        {marks.map(([n, t, w]) => <Mark key={n + t} $w={w}><Fav n={n} />{t}</Mark>)}
        <More>»</More>
      </Bookmarks>

      <Page>
        <Column>
          <Brand>
            <BrandLeft>
              <svg width="146" height="22" viewBox="0 0 146 22">
                <defs><linearGradient id="steel" gradientUnits="userSpaceOnUse" x1="0" y1="2" x2="0" y2="19"><stop offset="0" stopColor="#85878a" /><stop offset="1" stopColor="#ffffff" /></linearGradient></defs>
                <g fill="url(#steel)" fontFamily="Liberation Sans">
                  <text x="-1" y="19" fontSize="24" textLength="107" lengthAdjust="spacingAndGlyphs" stroke="url(#steel)" strokeWidth=".9">PowerBeam</text>
                  <text x="105" y="4" fontSize="3.500">TM</text>
                  <text x="109" y="19" fontSize="24" fontWeight="700" fontStyle="italic" stroke="url(#steel)" strokeWidth=".8" textLength="18" lengthAdjust="spacingAndGlyphs">M</text>
                  <text x="127" y="15" fontSize="18" fontWeight="700" fontStyle="italic">5</text>
                </g>
              </svg>
            </BrandLeft>
            <BrandRight>
              <svg width="97" height="44" viewBox="0 0 97 44" fill="none">
                <text x="0" y="41" fontSize="46" fontWeight="700" fontStyle="italic" fontFamily="Roboto" fill="#0090cf" textLength="39" lengthAdjust="spacingAndGlyphs">aır</text>
                <g stroke="#0090cf" strokeWidth="1.900">
                  <path d="M26.500 2.500A11.500 11.500 0 0 1 37 13" />
                  <path d="M26 6.300A7.500 7.500 0 0 1 33 13.300" />
                  <path d="M25.500 10A4 4 0 0 1 29 13.500" />
                </g>
                <text x="43" y="41" fontSize="46" fontFamily="Roboto" fill="#fff" textLength="44" lengthAdjust="spacingAndGlyphs">OS</text>
                <text x="88" y="13" fontSize="5.500" fontWeight="700" fontFamily="Liberation Sans" fill="#fff">TM</text>
              </svg>
            </BrandRight>
          </Brand>
          <NavRow>
            <NavTab>
              <Svg w={40} h={13} vb="0 0 40 13"><g fill="#2e2f30"><path d="M0 11.500L16 5.500l1 1.200L5.500 11.800z" /><path d="M40 11L24 5.500l-1 1.200L34.500 11.500z" /><path d="M8.500 4L18 5.200l.5-1.200L10 2.500zM20.500 4.500L22.500.5l-.2 4.200L30 3.300l-8 2.500zM17.500 6.500l-2 4.500 3.500-3.500zM20 6.500l1 5.500 2.500 0-1.800-5z" /></g></Svg>
            </NavTab>
            {['MAIN', 'WIRELESS', 'NETWORK', 'ADVANCED', 'SERVICES', 'SYSTEM'].map((t) => <NavTab key={t} $on={t === 'MAIN'}><span>{t}</span></NavTab>)}
            <NavTools>
              <Unms><i /><svg width="29" height="10"><text x="0" y="9" fontSize="10" fontWeight="700" fontFamily="Roboto" fill="#fff" textLength="25" lengthAdjust="spacingAndGlyphs">UNMS</text><text x="25" y="3.500" fontSize="3" fill="#fff">TM</text></svg></Unms>
              <Select $w={125} $mt={1}>Tools:<Arrow /></Select>
              <LogoutButton $w={50}>Logout</LogoutButton>
            </NavTools>
          </NavRow>
          <Panel>
            <Title>Status</Title>
            <StatusGrid>
              <div>{left.map((r) => <StatusRow key={r[0]} r={r} />)}</div>
              <div>{right.map((r, i) => <StatusRow key={i} r={r} />)}</div>
            </StatusGrid>
            <Title>Monitor</Title>
            <Axis>{['160', '140', '120', '100', '80', '60', '40', '20', 'kbps 0'].map((t) => <span key={t}>{t}</span>)}</Axis>
            <RefreshLine><Button $w={54}>Refresh</Button></RefreshLine>
          </Panel>
          <Foot>
            <svg width="150" height="34" viewBox="0 0 150 34" fill="none">
              <rect x="14" y="11" width="120" height="16" rx="3" fill="#c9c9cb" stroke="#111" strokeWidth="2.200" />
              <text x="31" y="22.300" fontSize="9.500" fontWeight="900" fontFamily="Roboto" fill="#111" letterSpacing="1.100">GENUINE</text>
              <path d="M14 3c3 2 6 2 9 0l4 5c-2 4 0 8 0 13 0 6-7 8-13 12C8 29 1 27 1 21c0-5 2-9 0-13l4-5c3 2 6 2 9 0z" fill="#fff" stroke="#111" strokeWidth="2.200" />
              <path d="M14 5.500c3 1.200 6 1.200 8.500.3l2.300 2.700c-1 4 .3 8 .3 12.500 0 4.300-5.600 6.300-11.100 9.300C8.500 27.700 2.900 25.700 2.900 21.400c0-4.400 1.300-8.500.3-12.500l2.300-2.900c2.500.9 5.500.7 8.500-.5z" fill="#0f6fb2" />
              <path d="M10.500 16v-3.500a3.500 3.500 0 0 1 7 0V16" stroke="#fff" strokeWidth="2" />
              <rect x="8.500" y="15.500" width="11" height="8" rx="1" fill="#fff" />
              <path d="M8.500 18h11M8.500 20.500h11" stroke="#8cc0e6" strokeWidth=".8" />
            </svg>
            <FootText>
              <div><a>PRIVACY POLICY</a></div>
              <div>© Copyright Ubiquiti Networks, Inc.</div>
            </FootText>
          </Foot>
        </Column>
      </Page>

      <Downloads>
        <Svg><path d="M2 1h4.500l1 1H14v14H2z" fill="#e8bf45" /><path d="M2 3h12v12H2z" fill="#f6d978" /><path d="M8 0h4.500v16H8z" fill="#b9bcbf" /><path d="M10.200 0v16" stroke="#55585c" strokeWidth="1.600" strokeDasharray="1 1" /></Svg>
        <FileName>bootstrap-4.3.1-dist.zip</FileName>
        <Svg w={10} h={6} vb="0 0 10 6"><path d="M.7 5.300L5 1l4.300 4.300" stroke="#bdc1c6" strokeWidth="1.500" /></Svg>
        <DlLine />
        <ShowAll>Tout afficher</ShowAll>
        <Close c="#bdc1c6" w={1.500} />
      </Downloads>

      <Taskbar>
        <StartBtn><Svg><path d="M0 2.300l6.500-.9v6.100H0zM7.300 1.300L16 0v7.500H7.300zM0 8.400h6.500v6.200L0 13.700zM7.300 8.400H16V16l-8.700-1.200z" fill="#fff" /></Svg></StartBtn>
        <Search>
          <Svg s={17} vb="0 0 17 17"><circle cx="10.500" cy="6.500" r="5.500" stroke="#e6e6e6" strokeWidth="1.300" /><path d="M6.700 10.500L.8 16.400" stroke="#e6e6e6" strokeWidth="1.300" /></Svg>
          Type here to search
        </Search>
        {tasks.map(([k, g, st, w]) => <Task key={k} $w={w} $state={st}>{g}</Task>)}
        <Tray>
          <TrayItem $w={24}><Svg w={13} h={7} vb="0 0 13 7"><path d="M.7 6.300L6.500.8l5.800 5.500" stroke="#fff" strokeWidth="1.300" /></Svg></TrayItem>
          <TrayItem $w={24}><Svg w={18} h={14} vb="0 0 18 14"><path d="M1 6a3.500 3.500 0 0 1 3-4 5 5 0 0 1 9 1 3.500 3.500 0 0 1 3 6H4A3 3 0 0 1 1 6z" fill="#c9ccd0" /><path d="M12 4l5 9.500H7z" fill="#fbc02d" /><path d="M12 7v3.500M12 11.500v1" stroke="#222" strokeWidth="1.300" /></Svg></TrayItem>
          <TrayItem $w={24}><Svg w={18} h={16} vb="0 0 18 16"><path d="M1 2.500L16.500.8v13.500L1 13z" stroke="#fff" strokeWidth="1.200" /><path d="M5 9.500a3.500 3.500 0 0 1 4.500-5M12 5.500a3.500 3.500 0 0 1-4.500 5M10 3v2.500H7.500" stroke="#fff" strokeWidth="1.200" /><circle cx="13.500" cy="12.500" r="3.600" fill="#e81123" /></Svg></TrayItem>
          <TrayItem $w={25}><Svg w={17} h={12} vb="0 0 17 12"><path d="M6 3.500h8.500v7H4.500V8M14.500 5.500H16v3h-1.500M1.500 0v2.500M4 0v2.500M.5 2.500h4.500v1.700a2.200 2.200 0 0 1-4.500 0zM2.700 6v5" stroke="#fff" strokeWidth="1.200" /></Svg></TrayItem>
          <TrayItem $w={24}><Svg w={13} h={13} vb="0 0 13 13"><g stroke="#fff" strokeWidth="1.200"><path d="M9.500 12.500A3 3 0 0 1 12.500 9.500" /><path d="M7 12.500A5.500 5.500 0 0 1 12.500 7" /><path d="M4 12.500A8.500 8.500 0 0 1 12.500 4" opacity=".8" /><path d="M1 12.500A11.500 11.500 0 0 1 12.500 1" opacity=".55" /></g></Svg></TrayItem>
          <TrayItem $w={24}><Svg w={16} h={13} vb="0 0 16 13"><path d="M.7 4.500h2.500L6.500 1.300v10.400L3.200 8.500H.7zM8.800 4.500q1.400 2 0 4M11 3q2.500 3.500 0 7" stroke="#fff" strokeWidth="1.200" /><path d="M13.200 1q3.600 5.500 0 11" stroke="#fff" strokeWidth="1.200" opacity=".45" /></Svg></TrayItem>
          <TrayItem $w={35}>ENG</TrayItem>
          <Clock>15:43<br />07/11/2019</Clock>
          <TrayItem $w={40}><Svg w={17} h={16} vb="0 0 17 16"><path d="M0 0h16v11.500h-5L7.500 15v-3.500H0z" fill="#fff" /><path d="M2.500 3h11M2.500 5.700h11M2.500 8.400h7" stroke="#1b2640" strokeWidth="1" /><circle cx="13" cy="12" r="3.300" fill="#fff" stroke="#1b2640" /><path d="M13 9.500a2.500 2.500 0 0 0 2 3.500" stroke="#1b2640" /></Svg></TrayItem>
          <TrayItem $w={8} />
          <Peek />
        </Tray>
      </Taskbar>

      <PingWindow>
        <PingTitle>
          <Svg><Chrome /></Svg>[RADIO-MUGANZO] - Ping - Google Chrome
          <PingButtons>
            <div><Svg s={10} vb="0 0 10 10"><path d="M0 5.500h10" stroke="#fff" /></Svg></div>
            <div><Svg s={10} vb="0 0 10 10"><path d="M.5.500h9v9h-9z" stroke="#fff" /></Svg></div>
            <div><Close c="#fff" w={1.100} /></div>
          </PingButtons>
        </PingTitle>
        <PingUrl><Warn /><Insecure>Non sécurisé</Insecure><Divider /><Url><b>10.0.0.5</b>/pingtest.cgi</Url></PingUrl>
        <PingBody>
          <PingHeading>Network Ping</PingHeading>
          <Form>
            <span>Select Destination IP:</span>
            <Line>
              <Select $w={106}>specify manually<Arrow /></Select>
              <Svg w={14} h={16} vb="0 0 14 16"><path d="M11.700 8.500A5 5 0 1 1 6.500 4.800" stroke="#555" strokeWidth="2.200" /><path d="M5.500.5l5.500 4.200L5.500 9z" fill="#555" /></Svg>
            </Line>
            <span>Packet Count:</span><Field $w={63}>20</Field>
            <span /><Field $w={135}>8.8.8.8</Field><span>Packet Size:</span><Field $w={63}>56</Field>
          </Form>
          <Table>
            <HeadRow><HeadCell $w={185}>Host Name</HeadCell><HeadCell $w={145}>Time</HeadCell><HeadCell $end>TTL</HeadCell></HeadRow>
            <List>
              <Rows>{pings.map((t) => <PingRow key={t}><span>8.8.8.8</span><span>{t}</span><span>{t === 'timeout' ? '' : '53'}</span></PingRow>)}</Rows>
              <Scroll>
                <Svg w={7} h={4} vb="0 0 7 4"><path d="M0 4h7L3.500 0z" fill="#505050" /></Svg>
                <Thumb />
                <Svg w={7} h={4} vb="0 0 7 4"><path d="M0 0h7L3.500 4z" fill="#a3a3a3" /></Svg>
              </Scroll>
            </List>
            <Summary><SumCell $w={498} $end>19 of 20 packets received, 5% lost</SumCell></Summary>
            <Summary $end>
              <SumCell $w={167}>Min: 52.934 <b>ms</b></SumCell><SumCell $w={157}>Avg: 73.51 <b>ms</b></SumCell><SumCell $w={174} $end>Max: 94.106 <b>ms</b></SumCell>
            </Summary>
          </Table>
          <StartLine><Button $w={39}>Start</Button></StartLine>
        </PingBody>
      </PingWindow>

      <Toast>
        <p>Firmware update v6.2.0 is available.<br />Check <a>release notes.</a></p>
        <p>Go to Ubiquiti Networks <a>downloads</a> page<a>.</a></p>
        <ToastButtons><Button $w={51}>Update</Button><Button $w={54}>Dismiss</Button></ToastButtons>
      </Toast>
    </Desktop>
  );
}
